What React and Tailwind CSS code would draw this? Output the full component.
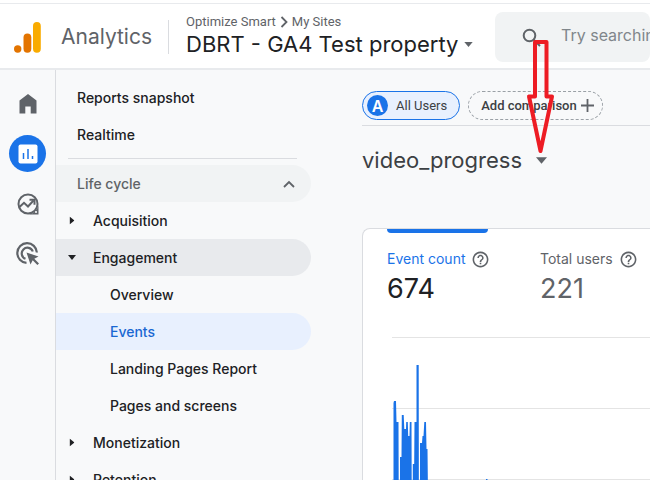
import { useState } from 'react';

const CHART_AREA =
    'M1.500 250V66L2 64H4L4.500 85H6.500L7 250z M8 250V120H9.500L9.800 78H11.700L12.300 92H14L14.200 85H15.800L16.200 99H17.500L17.800 85H19.500L20 250z M20.800 250V127H22.200L22.500 85H24.500V28H26.700L27 250z M28 250V106H30L30.500 99H31.500L32.300 85H34L34.500 112H35.500L37 250z M93 250L94 142H95.500L96.500 250z';

const Caret = ({ className }) => (
    <svg viewBox="0 0 10 6" className={className} fill="currentColor" aria-hidden="true">
        <path d="M0 0h10L5 6z" />
    </svg>
);

const HelpIcon = () => (
    <svg viewBox="0 0 24 24" className="w-[19px] h-[19px] text-[#5f6368]" fill="currentColor" aria-hidden="true">
        <path d="M11 18h2v-2h-2v2zm1-16C6.48 2 2 6.48 2 12s4.48 10 10 10 10-4.48 10-10S17.52 2 12 2zm0 18c-4.41 0-8-3.59-8-8s3.59-8 8-8 8 3.59 8 8-3.59 8-8 8zm0-14c-2.21 0-4 1.79-4 4h2c0-1.1.9-2 2-2s2 .9 2 2c0 2-3 1.75-3 5h2c0-2.25 3-2.5 3-5 0-2.21-1.79-4-4-4z" />
    </svg>
);

const Header = () => (
    <header className="flex items-center h-[66px] shrink-0 bg-white border-b-2 border-[#e8eaed] pt-0.5">
        <div className="flex items-center w-[168px] shrink-0 pl-3.5 gap-5">
            <svg width="27" height="31" viewBox="0 0 27 31" aria-hidden="true">
                <circle cx="3.7" cy="27" r="3.7" fill="#e37400" />
                <rect x="9.5" y="11.5" width="7.8" height="19.2" rx="3.9" fill="#e37400" />
                <rect x="19" y="0" width="7.8" height="30.7" rx="3.9" fill="#f9ab00" />
            </svg>
            <span className="text-[21px] leading-7 text-[#5f6368]">Analytics</span>
        </div>
        <div className="w-[327px] shrink-0 h-[34px] border-l border-[#dadce0] pl-[17px] pb-0.5 flex flex-col justify-center">
            <div className="flex items-center gap-0.5 font-['Roboto',sans-serif] text-[13px] leading-4 text-[#5f6368]">
                <a href="#account">Optimize Smart</a>
                <svg width="12" height="12" viewBox="0 0 12 12" fill="none" stroke="currentColor" strokeWidth="1.8" className="shrink-0" aria-hidden="true">
                    <path d="M3.500 1 8.500 6l-5 5" />
                </svg>
                <a href="#sites">My Sites</a>
            </div>
            <button type="button" className="flex items-center gap-1.5 text-[22px] leading-7 text-[#202124] whitespace-nowrap">
                DBRT - GA4 Test property
                <Caret className="w-[9px] h-[5px] text-[#5f6368]" />
            </button>
        </div>
        <label className="flex items-center flex-1 h-[50px] bg-[#f1f3f4] rounded-lg pl-[27px] gap-5 overflow-hidden">
            <svg width="19" height="19" viewBox="0 0 19 19" fill="none" stroke="#5f6368" strokeWidth="2" className="shrink-0" aria-hidden="true">
                <circle cx="7.500" cy="7.500" r="5.800" />
                <path d="M11.800 11.800 18 18" />
            </svg>
            <input
                type="text"
                aria-label="Search"
                placeholder="Try searching “web overview”"
                className="w-72 shrink-0 bg-transparent outline-none text-base pb-1 placeholder:text-[#80868b]"
            />
        </label>
    </header>
);

const Rail = () => (
    <nav className="w-14 shrink-0 border-r border-[#dadce0] flex flex-col items-center pt-[15px] gap-[13px] text-[#5f6368]">
        <a href="#home" aria-label="Home" className="w-[37px] h-[37px] flex items-center justify-center">
            <svg width="18" height="20" viewBox="0 0 18 20" fill="currentColor" aria-hidden="true">
                <path d="M9 0 0.500 6.500V19.500H6.300V12.500h5.400v7h5.800V6.500z" />
            </svg>
        </a>
        <a href="#reports" aria-label="Reports" className="w-[37px] h-[37px] rounded-full bg-[#1a73e8] flex items-center justify-center">
            <svg width="20" height="20" viewBox="0 0 20 20" aria-hidden="true">
                <rect x="0.500" y="0.500" width="19" height="19" rx="2" fill="#fff" />
                <path d="M5.500 9v6M10 5v10M14.500 12v3" stroke="#1a73e8" strokeWidth="1.500" />
            </svg>
        </a>
        <a href="#explore" aria-label="Explore" className="w-[37px] h-[37px] flex items-center justify-center">
            <svg width="22" height="22" viewBox="0 0 22 22" fill="none" stroke="currentColor" strokeWidth="2" aria-hidden="true">
                <circle cx="11" cy="11" r="9.500" />
                <path d="M21.500 11v10.500H11c5 0 10.500-5 10.500-10.500z" fill="currentColor" stroke="none" />
                <path d="M2.500 14 7 9.800l4 3.700 5.500-6" />
                <path d="M12.500 6.800h5v5" />
                <circle cx="19" cy="19" r="1.100" fill="#f8f9fa" stroke="none" />
            </svg>
        </a>
        <a href="#advertising" aria-label="Advertising" className="w-[37px] h-[37px] flex items-center justify-center">
            <svg width="23" height="23" viewBox="0 0 23 23" fill="none" stroke="currentColor" strokeWidth="2.200" aria-hidden="true">
                <path d="M10.500 20.800A9.800 9.800 0 1 1 20.900 10.500" />
                <path d="M9.500 16.800A5.700 5.700 0 1 1 16.800 9.500" />
                <path d="M10.500 10.500l12 4-4.200 2.200 4.700 4.700-1.600 1.600-4.700-4.700L14.500 22.500z" fill="currentColor" stroke="none" />
            </svg>
        </a>
    </nav>
);

const GroupRow = ({ label, open, onClick }) => (
    <button
        type="button"
        onClick={onClick}
        aria-expanded={open}
        className={`flex items-center w-full h-[37px] shrink-0 rounded-r-full ${open ? 'bg-[#e8eaed]' : ''}`}
    >
        <span className="w-[37px] pl-3 flex">
            <Caret className={`w-2 h-[5px] ${open ? '' : '-rotate-90'}`} />
        </span>
        {label}
    </button>
);

const SideNav = () => {
    const [openGroup, setOpenGroup] = useState('Engagement');
    const groups = [
        { label: 'Acquisition', items: [] },
        { label: 'Engagement', items: ['Overview', 'Events', 'Landing Pages Report', 'Pages and screens'] },
        { label: 'Monetization', items: [] },
        { label: 'Retention', items: [] },
    ];

    return (
        <nav className="w-[255px] shrink-0 flex flex-col pt-[9px] text-sm leading-5 font-medium text-[#202124]">
            <a href="#snapshot" className="flex items-center h-[37px] shrink-0 pl-[21px]">Reports snapshot</a>
            <a href="#realtime" className="flex items-center h-[37px] shrink-0 pl-[21px]">Realtime</a>
            <hr className="ml-3 mr-3.5 mt-[5px] mb-1.5 border-[#dadce0]" />
            <button type="button" className="flex items-center justify-between h-[37px] shrink-0 pl-[21px] pr-4 rounded-r-full bg-[#f1f3f4] text-[#5f6368]">
                Life cycle
                <svg width="12" height="8" viewBox="0 0 12 8" fill="none" stroke="currentColor" strokeWidth="1.800" aria-hidden="true">
                    <path d="M1 7 6 2l5 5" />
                </svg>
            </button>
            {groups.map(g => (
                <div key={g.label}>
                    <GroupRow
                        label={g.label}
                        open={openGroup === g.label}
                        onClick={() => setOpenGroup(openGroup === g.label ? null : g.label)}
                    />
                    {openGroup === g.label && (
                        <div>
                            {g.items.map(item => (
                                <a
                                    key={item}
                                    href="#report"
                                    className={`flex items-center h-[37px] pl-[54px] rounded-r-full ${item === 'Events' ? 'bg-[#e8f0fe] text-[#1967d2]' : ''}`}
                                >
                                    {item}
                                </a>
                            ))}
                        </div>
                    )}
                </div>
            ))}
        </nav>
    );
};

const Metric = ({ label, value, active }) => (
    <button type="button" className="relative w-[153px] shrink-0 pt-5 text-left">
        {active && <span className="absolute top-0 left-0 w-[101px] h-1 rounded-b-full bg-[#1a73e8]" />}
        <span className={`flex items-center gap-1.5 text-sm leading-5 ${active ? 'text-[#1a73e8]' : 'text-[#5f6368]'}`}>
            {label}
            <HelpIcon />
        </span>
        <span className={`block text-[27px] leading-10 ${active ? 'text-[#202124]' : 'text-[#5f6368]'}`}>{value}</span>
    </button>
);

const Report = () => (
    <main className="flex-1 min-w-0 pl-[51px] pt-[21px]">
        <div className="flex items-center gap-2 pb-[5px] border-b border-[#dadce0] text-[13px] leading-4 text-[#3c4043]">
            <button type="button" className="flex items-center h-[29px] pl-1 pr-3 gap-2 rounded-full border border-[#1a73e8] bg-[#e8f0fe] whitespace-nowrap">
                <span className="w-[21px] h-[21px] rounded-full bg-[#1a73e8] text-white text-base font-semibold flex items-center justify-center">A</span>
                <span className="font-['Roboto',sans-serif]">All Users</span>
            </button>
            <button type="button" className="flex items-center h-[29px] pl-3 pr-2 gap-1 rounded-full border border-dashed border-[#9aa0a6] font-['Roboto',sans-serif] font-medium whitespace-nowrap">
                Add comparison
                <svg width="13" height="13" viewBox="0 0 13 13" stroke="#5f6368" strokeWidth="1.800" aria-hidden="true">
                    <path d="M6.500 0v13M0 6.500h13" />
                </svg>
            </button>
        </div>
        <button type="button" className="flex items-center gap-3.5 mt-5 text-[22px] leading-7 text-[#3c4043]">
            video_progress
            <Caret className="w-[11px] h-[7px] text-[#5f6368]" />
        </button>
        <section className="mt-[54px] pl-6 h-[400px] rounded-tl-lg border-l border-t border-[#dadce0] bg-white overflow-hidden">
            <div className="flex">
                <Metric label="Event count" value="674" active />
                <Metric label="Total users" value="221" />
            </div>
            <div className="pl-[5px] pt-7">
                <svg className="w-full h-[252px]" aria-label="Event count over time">
                    <path d="M0 0.500h2000M0 71.500h2000M0 142.500h2000" stroke="#e4e4e4" strokeWidth="1" />
                    <path d={CHART_AREA} fill="#1a73e8" />
                </svg>
            </div>
        </section>
    </main>
);

const App = () => (
    <div className="relative h-screen overflow-hidden flex flex-col bg-[#f8f9fa] font-['Inter',sans-serif]">
        <div className="h-1 shrink-0 bg-white border-b border-[#e8eaed]" />
        <Header />
        <div className="flex flex-1 min-h-0">
            <Rail />
            <SideNav />
            <Report />
        </div>
        {/* Callout arrow pointing at the event selector */}
        <svg className="absolute left-[526px] top-[39px] pointer-events-none" width="29" height="115" viewBox="0 0 29 115" fill="none" stroke="#ed1c24" strokeWidth="4" aria-hidden="true">
            <path d="M9 3H20.500V57.500H26L14.500 112 3 57.500H9z" strokeLinejoin="round" />
        </svg>
    </div>
);

export default App;
